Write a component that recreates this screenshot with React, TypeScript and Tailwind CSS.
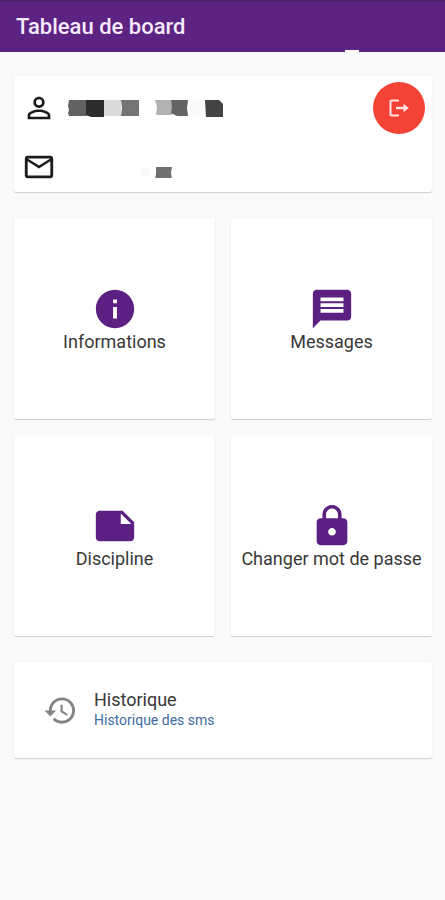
import type { IconType } from 'react-icons';
import { MdHistory, MdInfo, MdLock, MdMailOutline, MdMessage, MdNote, MdPersonOutline } from 'react-icons/md';

type Tile = {
  label: string;
  href: string;
  icon: IconType;
};

const tiles: Tile[] = [
  { label: 'Informations', href: '#informations', icon: MdInfo },
  { label: 'Messages', href: '#messages', icon: MdMessage },
  { label: 'Discipline', href: '#discipline', icon: MdNote },
  { label: 'Changer mot de passe', href: '#mot-de-passe', icon: MdLock },
];

const cardClass = 'rounded-xs bg-white shadow-[0_1px_1px_rgba(0,0,0,0.16),0_0_3px_rgba(0,0,0,0.03)]';

const LogoutIcon = () => (
  <svg width="20" height="18" viewBox="0 0 20 18" fill="none" stroke="currentColor" strokeWidth="2" aria-hidden="true">
    <path d="M10 1.5H2.5Q1.5 1.5 1.5 2.5v13Q1.5 16.5 2.5 16.5H10" />
    <path d="M7 9h9" strokeWidth="2.4" />
    <path d="M14.5 4.8 19.8 9l-5.3 4.2z" fill="currentColor" stroke="none" />
  </svg>
);

// Name of the account, blurred out
const MaskedName = () => (
  <svg width="158" height="22" viewBox="0 0 158 22" role="img" aria-label="Nom masqué">
    <path d="M1 3h18v16H1l-1-3 1-3-1-4z" fill="#626262" />
    <path d="M18 3h18v17H23l-5-2z" fill="#2c2c2c" />
    <path d="M36 3h17v16H36z" fill="#dadada" />
    <path d="M53 3h18v16H53l1-8z" fill="#747474" />
    <path d="M87 3h17v15H88l1-8z" fill="#b2b2b2" />
    <path d="M103 3h17l-1 8 1 8h-11l-6-3 1-6z" fill="#646464" />
    <path d="M121 3h16v16h-16z" fill="#fafafa" />
    <path d="M137 3h14l4 4v13h-17z" fill="#434343" />
  </svg>
);

const MaskedMail = () => (
  <svg width="158" height="22" viewBox="0 0 158 22" role="img" aria-label="Adresse masquée">
    <path d="M88 11h16l-1 6 1 6H87l1-5z" fill="#707070" />
    <path d="M73 12h8v9h-8z" fill="#fafafa" />
  </svg>
);

const Header = () => (
  <header className="relative flex h-[52px] items-center border-t-2 border-[#4a2168] bg-[#5c2382] px-4">
    <h1 className="text-[22px] leading-6 font-medium text-[#f5eafa]">Tableau de board</h1>
    <span className="absolute right-[86px] bottom-0 h-[2px] w-[14px] bg-[#fafafa]" />
  </header>
);

const ProfileCard = () => (
  <section className={`${cardClass} flex items-start justify-between pt-[6px] pr-[7px] pb-2 pl-2`}>
    <div className="flex flex-col gap-[25px] pt-[9px] text-[#1c1c1c]">
      <div className="flex items-center gap-3">
        <MdPersonOutline size={34} />
        <MaskedName />
      </div>
      <div className="flex items-center gap-3">
        <MdMailOutline size={34} />
        <MaskedMail />
      </div>
    </div>
    <button
      type="button"
      aria-label="Se déconnecter"
      className="flex size-[52px] items-center justify-center rounded-full bg-[#f44336] text-[#ffe4e0]"
    >
      <LogoutIcon />
    </button>
  </section>
);

const TileCard = ({ label, href, icon: Icon }: Tile) => (
  <a href={href} className={`${cardClass} flex aspect-square flex-col items-center justify-center`}>
    <Icon size={46} className="text-[#5c1f82]" />
    <span className="text-[18px] leading-5 whitespace-nowrap text-[#383838]">{label}</span>
  </a>
);

const App = () => {
  return (
    <div className="min-h-screen bg-[#fafafa] font-[Roboto,'Liberation_Sans',sans-serif]">
      <Header />
      <main className="flex flex-col gap-[26px] pt-6 pr-[13px] pl-[14px]">
        <ProfileCard />

        <nav className="grid grid-cols-2 gap-4" aria-label="Menu">
          {tiles.map((tile) => (
            <TileCard key={tile.href} {...tile} />
          ))}
        </nav>

        <a href="#historique" className={`${cardClass} flex items-center gap-4 px-[29px] py-7`}>
          <MdHistory size={35} className="text-[#858585]" />
          <div>
            <p className="text-[18px] leading-5 text-[#383838]">Historique</p>
            <p className="text-[14px] leading-5 text-[#3f6c9f]">Historique des sms</p>
          </div>
        </a>
      </main>
    </div>
  );
};

export default App;
